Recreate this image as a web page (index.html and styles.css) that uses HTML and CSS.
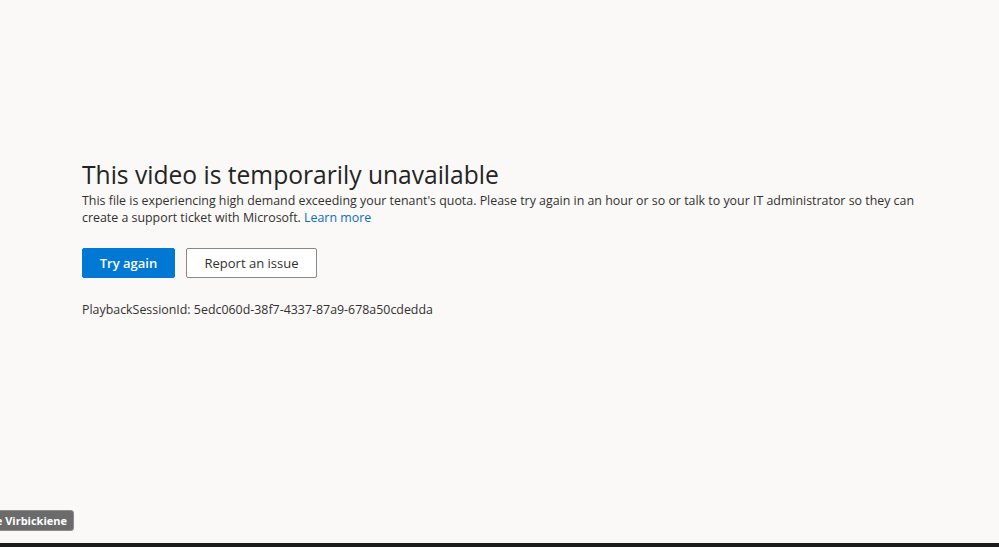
FILE: index.html
```html
<!DOCTYPE html>
<html lang="en">
<head>
<meta charset="utf-8">
<title>This video is temporarily unavailable</title>
<link rel="stylesheet" href="styles.css">
</head>
<body>
<div class="page">
  <main class="stage">
    <section class="error">
      <h1 class="error-title">This video is temporarily unavailable</h1>
      <p class="error-text">This file is experiencing high demand exceeding your tenant's quota. Please try again in an hour or so or talk to your IT administrator so they can create a support ticket with Microsoft. <a class="link" href="#">Learn more</a></p>
      <div class="actions">
        <button class="btn btn-primary" type="button">Try again</button>
        <button class="btn btn-secondary" type="button">Report an issue</button>
      </div>
      <p class="session">PlaybackSessionId: 5edc060d-38f7-4337-87a9-678a50cdedda</p>
    </section>
    <div class="name-tag">Giedre Virbickiene</div>
  </main>
  <div class="bottom-bar"></div>
</div>
</body>
</html>
```
FILE: styles.css
```css
html, body {
  margin: 0;
  padding: 0;
  height: 100%;
}
body {
  background: #faf9f8;
  font-family: "Open Sans", "Noto Sans", sans-serif;
  color: #323130;
  overflow: hidden;
}
.page {
  display: flex;
  flex-direction: column;
  height: 547px;
}
.stage {
  flex: 1;
  position: relative;
  padding: 158px 82px 0 82px;
}
.error {
  display: flex;
  flex-direction: column;
  max-width: 850px;
}
.error-title {
  margin: 0;
  font-size: 24.6px;
  font-weight: 400;
  line-height: 34px;
  color: #242424;
}
.error-text {
  margin: 0;
  font-size: 12.4px;
  line-height: 17px;
  color: #323130;
}
.link {
  color: #0f6cbd;
  text-decoration: none;
}
.actions {
  display: flex;
  gap: 11px;
  margin-top: 22px;
}
.btn {
  height: 30px;
  font-family: inherit;
  font-size: 13px;
  font-weight: 600;
  border-radius: 2px;
  padding: 0;
  cursor: pointer;
}
.btn-primary {
  width: 93px;
  background: #0078d4;
  border: 1px solid #0078d4;
  color: #ffffff;
}
.btn-secondary {
  width: 131px;
  background: #ffffff;
  border: 1px solid #8a8886;
  color: #323130;
  font-weight: 500;
}
.session {
  margin: 23px 0 0;
  font-size: 12.4px;
  line-height: 17px;
  color: #323130;
}
.name-tag {
  position: absolute;
  left: -41px;
  top: 510px;
  height: 21px;
  padding: 0 6px;
  display: flex;
  align-items: center;
  background: #6b6b6b;
  border: 1px solid #8c8c8c;
  border-radius: 3px;
  box-sizing: border-box;
  color: #ffffff;
  font-size: 11px;
  font-weight: 700;
  white-space: nowrap;
}
.bottom-bar {
  height: 4px;
  background: #1c1c1c;
}
```
